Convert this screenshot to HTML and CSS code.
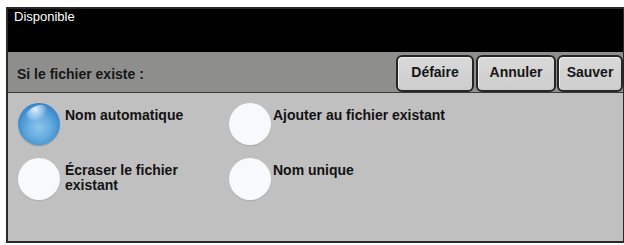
FILE: index.html
```html
<!DOCTYPE html>
<html lang="fr">
<head>
<meta charset="utf-8">
<title>Si le fichier existe</title>
<link rel="stylesheet" href="styles.css">
</head>
<body>
<div class="frame">
  <div class="header">Disponible</div>
  <div class="bar">
    <span class="bar-label">Si le fichier existe :</span>
    <div class="actions">
      <button class="btn btn-undo">Défaire</button>
      <button class="btn btn-cancel">Annuler</button>
      <button class="btn btn-save">Sauver</button>
    </div>
  </div>
  <div class="content">
    <div class="options">
      <div class="option">
        <span class="radio radio-on"></span>
        <span class="label">Nom automatique</span>
      </div>
      <div class="option option-right">
        <span class="radio"></span>
        <span class="label">Ajouter au fichier existant</span>
      </div>
      <div class="option">
        <span class="radio"></span>
        <span class="label">Écraser le fichier<br>existant</span>
      </div>
      <div class="option option-right">
        <span class="radio"></span>
        <span class="label">Nom unique</span>
      </div>
    </div>
  </div>
</div>
</body>
</html>
```

FILE: styles.css
```css
html, body {
  margin: 0;
  padding: 0;
  background: #ffffff;
}

body {
  font-family: "Liberation Sans", Arial, sans-serif;
}

.frame {
  margin: 7px 0 0 6px;
  width: 615px;
  border: 2px solid #2a2a2a;
  display: flex;
  flex-direction: column;
}

.header {
  height: 43px;
  background: #000000;
  color: #ffffff;
  font-size: 13px;
  line-height: 15px;
  padding-left: 6px;
  box-sizing: border-box;
}

.bar {
  height: 41px;
  background: #8e8f8d;
  border-bottom: 1px solid #3a3a3a;
  box-sizing: border-box;
  display: flex;
  justify-content: space-between;
  align-items: flex-end;
}

.bar-label {
  align-self: center;
  padding: 4px 0 0 9px;
  font-size: 14px;
  font-weight: bold;
  line-height: 16px;
  color: #161616;
}

.actions {
  display: flex;
  gap: 1px;
}

.btn {
  height: 37px;
  margin: 0;
  padding: 0 0 3px 0;
  border: 2px solid #262626;
  border-radius: 6px;
  background: linear-gradient(#d9d9d9, #cdcdcd);
  box-shadow: inset 1px 1px 0 #f0f0f0;
  font-family: "Liberation Sans", Arial, sans-serif;
  font-size: 14px;
  font-weight: bold;
  color: #161616;
  box-sizing: border-box;
}

.btn-undo { width: 78px; margin-right: 1px; }
.btn-cancel { width: 80px; }
.btn-save { width: 66px; }

.content {
  height: 148px;
  background: #c0c0c0;
  box-sizing: border-box;
  padding: 10px 0 0 10px;
}

.options {
  display: grid;
  grid-template-columns: 211px auto;
  row-gap: 13px;
}

.option {
  display: flex;
  gap: 5px;
}

.option-right {
  gap: 2px;
}

.radio {
  flex: none;
  width: 42px;
  height: 42px;
  border-radius: 50%;
  background: #f7fafc;
  box-shadow: 0 1px 1px rgba(120, 120, 120, 0.25);
  position: relative;
}

.radio-on {
  background: radial-gradient(circle at 50% 58%, #8cc4e8 0%, #67ade0 35%, #3888cd 70%, #1d63aa 92%, #175390 100%);
  box-shadow: 0 1px 1px rgba(40, 60, 90, 0.35);
}

.radio-on::after {
  content: "";
  position: absolute;
  left: 7px;
  top: 3px;
  width: 24px;
  height: 14px;
  border-radius: 50%;
  background: radial-gradient(ellipse at 50% 20%, rgba(255, 255, 255, 0.85) 0%, rgba(255, 255, 255, 0.25) 55%, rgba(255, 255, 255, 0) 75%);
  transform: rotate(-25deg);
}

.label {
  padding-top: 5px;
  font-size: 14px;
  font-weight: bold;
  line-height: 15px;
  color: #121212;
}
```
